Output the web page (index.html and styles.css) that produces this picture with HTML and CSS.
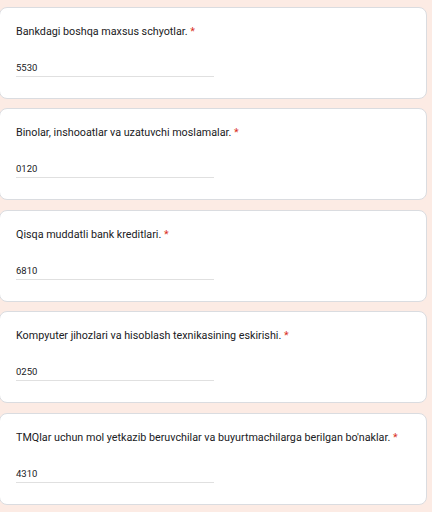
FILE: index.html
```html
<!doctype html>
<html>
<head>
<meta charset="utf-8">
<title>Savollar</title>
<link rel="stylesheet" href="styles.css">
</head>
<body>
<div class="form-list">
	<div class="question">
		<div class="q-title">Bankdagi boshqa maxsus schyotlar. <span class="req">*</span></div>
		<div class="q-answer">5530</div>
	</div>
	<div class="question">
		<div class="q-title">Binolar, inshooatlar va uzatuvchi moslamalar. <span class="req">*</span></div>
		<div class="q-answer">0120</div>
	</div>
	<div class="question">
		<div class="q-title">Qisqa muddatli bank kreditlari. <span class="req">*</span></div>
		<div class="q-answer">6810</div>
	</div>
	<div class="question">
		<div class="q-title">Kompyuter jihozlari va hisoblash texnikasining eskirishi. <span class="req">*</span></div>
		<div class="q-answer">0250</div>
	</div>
	<div class="question">
		<div class="q-title">TMQlar uchun mol yetkazib beruvchilar va buyurtmachilarga berilgan bo'naklar. <span class="req">*</span></div>
		<div class="q-answer">4310</div>
	</div>
</div>
</body>
</html>
```

FILE: styles.css
```css
body
{
	margin:0px;
	padding:0px;
	background:#fcebe4;
	font-family:Roboto, "Liberation Sans", sans-serif;
	color:#202124;
}
.form-list
{
	display:flex;
	flex-direction:column;
	gap:9.4px;
	padding:7px 5px 0px 0px;
}
.question
{
	height:90px;
	box-sizing:content-box;
	background:#fff;
	border:1px #dadce0 solid;
	border-radius:8px;
	padding:0px 16px;
	margin-left:-1px;
}
.q-title
{
	font-size:10.75px;
	line-height:16px;
	margin-top:16px;
}
.req
{
	color:#d93025;
}
.q-answer
{
	width:198px;
	margin-top:21px;
	font-size:9.5px;
	line-height:14px;
	padding-bottom:1px;
	border-bottom:1px #e0e0e0 solid;
}
```
